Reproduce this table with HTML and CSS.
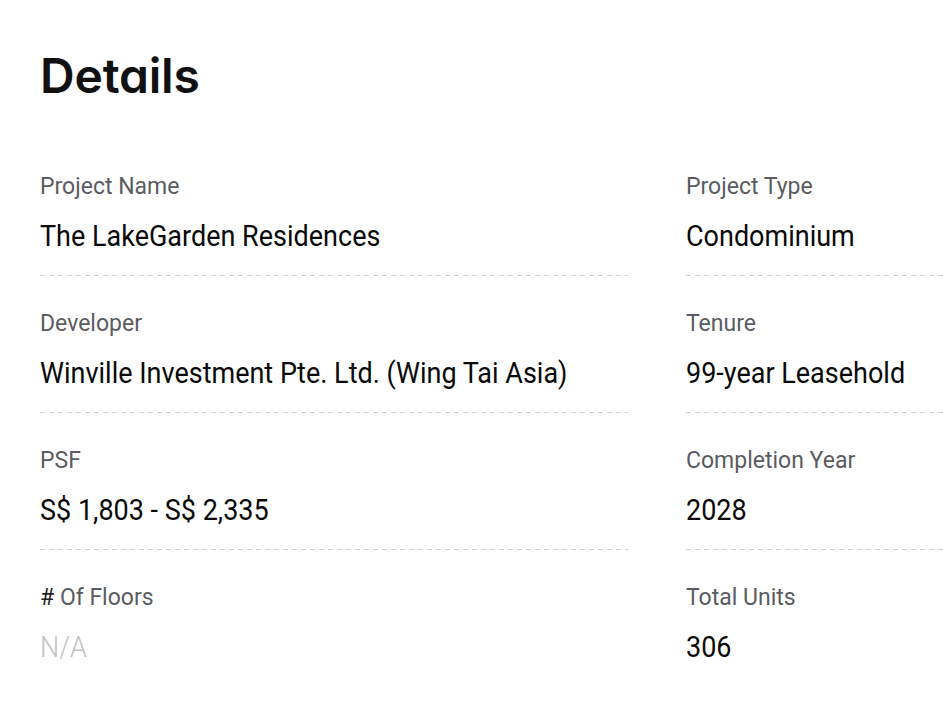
FILE: index.html
```html
<!DOCTYPE html>
<html lang="en">
<head>
<meta charset="utf-8">
<title>Details</title>
<link rel="stylesheet" href="styles.css">
</head>
<body>
<section class="details">
  <h2 class="details-title">Details</h2>
  <div class="details-grid">
    <div class="item">
      <div class="label">Project Name</div>
      <div class="value">The LakeGarden Residences</div>
    </div>
    <div class="item">
      <div class="label">Project Type</div>
      <div class="value">Condominium</div>
    </div>
    <div class="item">
      <div class="label">Developer</div>
      <div class="value">Winville Investment Pte. Ltd. (Wing Tai Asia)</div>
    </div>
    <div class="item">
      <div class="label">Tenure</div>
      <div class="value">99-year Leasehold</div>
    </div>
    <div class="item">
      <div class="label">PSF</div>
      <div class="value">S$ 1,803 - S$ 2,335</div>
    </div>
    <div class="item">
      <div class="label">Completion Year</div>
      <div class="value">2028</div>
    </div>
    <div class="item item-last">
      <div class="label"><span class="hash">#</span> Of Floors</div>
      <div class="value value-empty">N/A</div>
    </div>
    <div class="item item-last">
      <div class="label">Total Units</div>
      <div class="value">306</div>
    </div>
  </div>
</section>
</body>
</html>
```

FILE: styles.css
```css
html, body {
  margin: 0;
  padding: 0;
  background: #ffffff;
  overflow: hidden;
}

body {
  font-family: Roboto, "Liberation Sans", sans-serif;
  color: #111111;
}

.details {
  padding: 48px 0 0 40px;
  width: 1300px;
}

.details-title {
  margin: 0;
  font-family: Inter, "Noto Sans", sans-serif;
  font-feature-settings: "cv11" 1;
  font-weight: 600;
  font-size: 48px;
  line-height: 56px;
  letter-spacing: -0.2px;
  color: #111111;
}

.details-grid {
  margin-top: 35px;
  display: grid;
  grid-template-columns: 588px 588px;
  column-gap: 58px;
}

.item {
  padding: 33px 0 20px;
  background-image: repeating-linear-gradient(to right, #cfcfcf 0 5px, transparent 5px 9px);
  background-size: 100% 1px;
  background-repeat: no-repeat;
  background-position: left bottom;
}

.item-last {
  background-image: none;
}

.label {
  font-size: 23px;
  line-height: 30px;
  color: #5a5c61;
  transform: scaleY(1.05);
}

.hash {
  color: #222222;
}

.value {
  margin-top: 14px;
  font-size: 27px;
  line-height: 40px;
  color: #0a0a0a;
  transform: scaleY(1.12);
}

.value-empty {
  color: #c2c2c2;
  font-weight: 300;
}
```
